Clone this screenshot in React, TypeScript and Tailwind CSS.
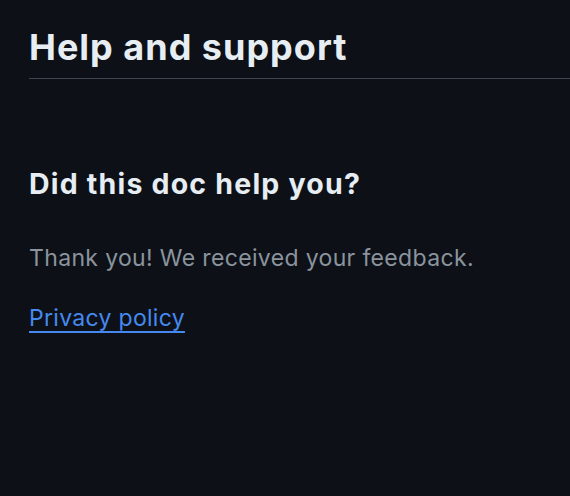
import React from 'react'

const App = () => {
    return (
        <div className="min-h-[496px] w-[570px] bg-[#0d1117] text-[#e6edf3] font-['Inter',sans-serif] pl-[29px] pt-[25px] overflow-hidden">
            <h2 className="text-[36px] leading-[44px] font-bold tracking-[1px] border-b border-[#3d444d] pb-[9px]">
                Help and support
            </h2>
            <div className="pt-[87px]">
                <h3 className="text-[28.5px] leading-[36px] font-bold tracking-[1.2px]">Did this doc help you?</h3>
                <p className="mt-[40px] text-[23px] leading-[32px] tracking-[0.35px] text-[#8b949e]">
                    Thank you! We received your feedback.
                </p>
                <a href="#" className="block mt-[28px] text-[23px] leading-[32px] tracking-[0.3px] text-[#4589f0] underline underline-offset-[5px] w-fit">
                    Privacy policy
                </a>
            </div>
        </div>
    )
}

export default App
